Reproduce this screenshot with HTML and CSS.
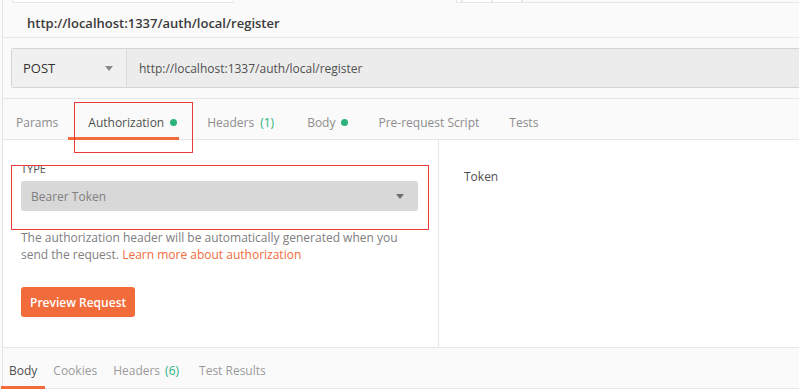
FILE: index.html
```html
<!DOCTYPE html>
<html lang="en">
<head>
    <meta charset="utf-8">
    <link rel="stylesheet" href="styles.css">
    <title>Postman - register</title>
</head>
<body>
    <div class="app">
        <div class="tabstrip">
            <div class="stub stub-main"></div>
            <div class="stub-gap"></div>
            <div class="stub stub-small"></div>
            <div class="stub stub-mid"></div>
            <div class="stub stub-mid"></div>
            <div class="stub stub-rest"></div>
        </div>

        <div class="request-title">http://localhost:1337/auth/local/register</div>

        <div class="url-row">
            <div class="url-bar">
                <div class="method">
                    <span>POST</span>
                    <span class="caret"></span>
                </div>
                <div class="url">http://localhost:1337/auth/local/register</div>
            </div>
        </div>

        <div class="tabs">
            <div class="tab">Params</div>
            <div class="tab active">Authorization <span class="dot"></span></div>
            <div class="tab">Headers <span class="count">(1)</span></div>
            <div class="tab">Body <span class="dot"></span></div>
            <div class="tab">Pre-request Script</div>
            <div class="tab">Tests</div>
        </div>

        <div class="auth">
            <div class="auth-left">
                <div class="type-label">TYPE</div>
                <div class="select">
                    <span>Bearer Token</span>
                    <span class="caret dark"></span>
                </div>
                <p class="help">The authorization header will be automatically generated when you send the request. <a href="#">Learn more about authorization</a></p>
                <button class="preview">Preview Request</button>
            </div>
            <div class="auth-right">
                <div class="field-name">Token</div>
            </div>
        </div>

        <div class="response-tabs">
            <div class="rtab active">Body</div>
            <div class="rtab">Cookies</div>
            <div class="rtab">Headers <span class="count">(6)</span></div>
            <div class="rtab">Test Results</div>
        </div>

        <!-- red annotation boxes drawn over the screenshot -->
        <div class="mark mark-tab"></div>
        <div class="mark mark-type"></div>
    </div>
</body>
</html>
```

FILE: styles.css
```css
body {
    margin: 0;
    background-color: #fafafa;
    font-family: "Open Sans", "Liberation Sans", sans-serif;
    color: #505050;
    overflow: hidden;
}

.app {
    position: relative;
    margin-left: 2px;
    border-left: 1px solid #e3e3e3;
    height: 389px;
    display: flex;
    flex-direction: column;
}

/* remnant of the tab bar above */
.tabstrip {
    display: flex;
    height: 3px;
    flex-shrink: 0;
}
.stub {
    border: 1px solid #e6e6e6;
    border-top: none;
    background: #fff;
}
.stub-main {
    margin-left: 9px;
    width: 220px;
}
.stub-gap {
    width: 222px;
}
.stub-small {
    width: 4px;
}
.stub-mid {
    width: 28px;
}
.stub-rest {
    flex: 1;
    background: #fafafa;
    border-right: none;
}

.request-title {
    height: 35px;
    line-height: 40px;
    padding-left: 24px;
    font-size: 13px;
    font-weight: 600;
    color: #3a3a3a;
    border-bottom: 1px solid #e8e8e8;
    box-sizing: border-box;
    flex-shrink: 0;
}

.url-row {
    padding: 10px 0 10px 8px;
    border-bottom: 1px solid #e6e6e6;
    flex-shrink: 0;
}
.url-bar {
    display: flex;
    height: 40px;
    border: 1px solid #d4d4d4;
    border-right: none;
    border-radius: 3px 0 0 3px;
    background: #ececec;
    box-sizing: border-box;
}
.method {
    width: 115px;
    display: flex;
    align-items: center;
    justify-content: space-between;
    padding: 0 13px 0 11px;
    box-sizing: border-box;
    background: #f0f0f0;
    border-right: 1px solid #dcdcdc;
    font-size: 13px;
    color: #333;
}
.caret {
    width: 0;
    height: 0;
    border-left: 4px solid transparent;
    border-right: 4px solid transparent;
    border-top: 5px solid #8a8a8a;
}
.caret.dark {
    border-top-color: #6e6e6e;
}
.url {
    display: flex;
    align-items: center;
    padding-left: 12px;
    font-size: 12px;
    color: #505050;
}

.tabs {
    display: flex;
    gap: 30px;
    height: 41px;
    padding: 6px 0 0 13px;
    border-bottom: 1px solid #e6e6e6;
    box-sizing: border-box;
    flex-shrink: 0;
}
.tab {
    position: relative;
    display: flex;
    align-items: center;
    font-size: 12px;
    color: #8c8c8c;
}
.tab.active {
    color: #505050;
}
.tab.active::after {
    content: "";
    position: absolute;
    left: -20px;
    width: 111px;
    bottom: -1px;
    height: 3px;
    background: #f26b3a;
}
.dot {
    display: inline-block;
    width: 7px;
    height: 7px;
    border-radius: 50%;
    background: #2bb37b;
    margin-left: 6px;
}
.count {
    color: #2bb37b;
    margin-left: 5px;
}
.tab .count {
    margin-left: 6px;
    margin-right: 3px;
}

.auth {
    flex: 1;
    display: flex;
    background: #fff;
    border-bottom: 1px solid #e6e6e6;
}
.auth-left {
    width: 436px;
    padding: 22px 20px 0 18px;
    box-sizing: border-box;
    border-right: 1px solid #e6e6e6;
}
.type-label {
    font-size: 11px;
    color: #505050;
    line-height: 14px;
}
.select {
    display: flex;
    align-items: center;
    justify-content: space-between;
    height: 30px;
    margin-top: 5px;
    padding: 0 14px 0 10px;
    background: #d8d8d8;
    border-radius: 3px;
    font-size: 12px;
    color: #808080;
}
.help {
    margin: 18px 0 0;
    font-size: 12px;
    line-height: 17px;
    color: #808080;
}
.help a {
    color: #f26b3a;
    text-decoration: none;
}
.preview {
    margin-top: 24px;
    height: 30px;
    padding: 0 9px;
    border: none;
    border-radius: 3px;
    background: #f26b3a;
    color: #fff;
    font-family: inherit;
    font-size: 12px;
    font-weight: 600;
}
.auth-right {
    flex: 1;
    padding: 28px 0 0 25px;
}
.field-name {
    font-size: 12px;
    color: #505050;
}

.response-tabs {
    display: flex;
    gap: 16px;
    height: 41px;
    padding: 4px 0 0 6px;
    flex-shrink: 0;
    border-bottom: 1px solid #e6e6e6;
    box-sizing: border-box;
}
.rtab {
    position: relative;
    display: flex;
    align-items: center;
    font-size: 12px;
    color: #9a9a9a;
}
.rtab:nth-child(3) {
    margin-right: 4px;
}
.rtab.active {
    color: #505050;
}
.rtab.active::after {
    content: "";
    position: absolute;
    left: -8px;
    right: -8px;
    bottom: -1px;
    height: 3px;
    background: #f26b3a;
}

.mark {
    position: absolute;
    border: 1px solid #ea3a3a;
}
.mark-tab {
    left: 71px;
    top: 102px;
    width: 117px;
    height: 49px;
}
.mark-type {
    left: 8px;
    top: 165px;
    width: 416px;
    height: 63px;
}
```
